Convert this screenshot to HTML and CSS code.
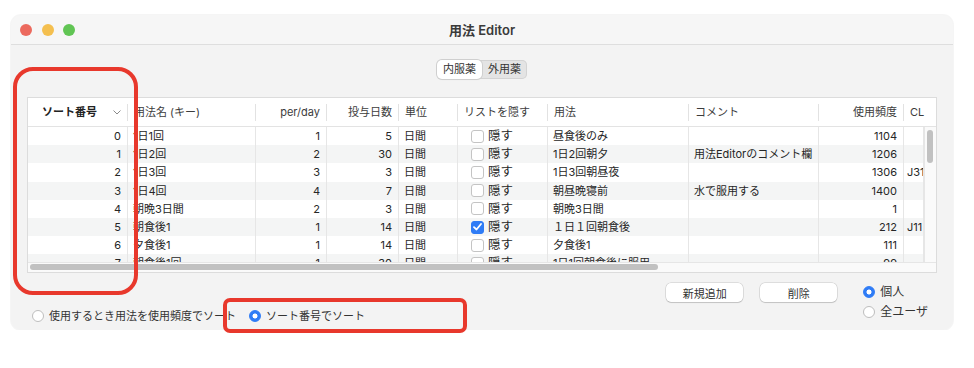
FILE: index.html
```html
<!DOCTYPE html>
<html>

<head>
  <title>用法 Editor</title>
  <link rel="stylesheet" href="styles.css">
</head>

<body>

  <div class="window">
    <div class="titlebar">
      <div class="lights">
        <span class="light red"></span>
        <span class="light yellow"></span>
        <span class="light green"></span>
      </div>
      <div class="title">用法 Editor</div>
      <div></div>
    </div>

    <div class="content">
      <div class="segments">
        <span class="seg active">内服薬</span>
        <span class="seg">外用薬</span>
      </div>

      <div class="table">
        <div class="thead">
          <div class="th sorted"><span>ソート番号</span>
            <svg width="8" height="5" viewBox="0 0 8 5"><polyline points="0.5,0.5 4,4 7.5,0.5" fill="none" stroke="#8a8a8a" stroke-width="1"/></svg>
          </div>
          <div class="th">用法名 (キー)</div>
          <div class="th r">per/day</div>
          <div class="th r">投与日数</div>
          <div class="th">単位</div>
          <div class="th">リストを隠す</div>
          <div class="th">用法</div>
          <div class="th">コメント</div>
          <div class="th r">使用頻度</div>
          <div class="th last">CL</div>
        </div>

        <div class="tbody">
          <div class="rows">
            <div class="row">
              <div class="c r">0</div><div class="c">1日1回</div><div class="c r">1</div><div class="c r">5</div><div class="c">日間</div>
              <div class="c hide"><span class="box"></span>隠す</div>
              <div class="c">昼食後のみ</div><div class="c"></div><div class="c r">1104</div><div class="c"></div>
            </div>
            <div class="row">
              <div class="c r">1</div><div class="c">1日2回</div><div class="c r">2</div><div class="c r">30</div><div class="c">日間</div>
              <div class="c hide"><span class="box"></span>隠す</div>
              <div class="c">1日2回朝夕</div><div class="c">用法Editorのコメント欄</div><div class="c r">1206</div><div class="c"></div>
            </div>
            <div class="row">
              <div class="c r">2</div><div class="c">1日3回</div><div class="c r">3</div><div class="c r">3</div><div class="c">日間</div>
              <div class="c hide"><span class="box"></span>隠す</div>
              <div class="c">1日3回朝昼夜</div><div class="c"></div><div class="c r">1306</div><div class="c cl">J31</div>
            </div>
            <div class="row">
              <div class="c r">3</div><div class="c">1日4回</div><div class="c r">4</div><div class="c r">7</div><div class="c">日間</div>
              <div class="c hide"><span class="box"></span>隠す</div>
              <div class="c">朝昼晩寝前</div><div class="c">水で服用する</div><div class="c r">1400</div><div class="c"></div>
            </div>
            <div class="row">
              <div class="c r">4</div><div class="c">朝晩3日間</div><div class="c r">2</div><div class="c r">3</div><div class="c">日間</div>
              <div class="c hide"><span class="box"></span>隠す</div>
              <div class="c">朝晩3日間</div><div class="c"></div><div class="c r">1</div><div class="c"></div>
            </div>
            <div class="row">
              <div class="c r">5</div><div class="c">朝食後1</div><div class="c r">1</div><div class="c r">14</div><div class="c">日間</div>
              <div class="c hide"><span class="box checked"><svg width="9" height="8" viewBox="0 0 9 8"><polyline points="1,4.2 3.5,6.5 8,1" fill="none" stroke="#fff" stroke-width="1.8" stroke-linecap="round" stroke-linejoin="round"/></svg></span>隠す</div>
              <div class="c">１日１回朝食後</div><div class="c"></div><div class="c r">212</div><div class="c cl">J11</div>
            </div>
            <div class="row">
              <div class="c r">6</div><div class="c">夕食後1</div><div class="c r">1</div><div class="c r">14</div><div class="c">日間</div>
              <div class="c hide"><span class="box"></span>隠す</div>
              <div class="c">夕食後1</div><div class="c"></div><div class="c r">111</div><div class="c"></div>
            </div>
            <div class="row">
              <div class="c r">7</div><div class="c">朝食後1回</div><div class="c r">1</div><div class="c r">30</div><div class="c">日間</div>
              <div class="c hide"><span class="box"></span>隠す</div>
              <div class="c">1日1回朝食後に服用</div><div class="c"></div><div class="c r">99</div><div class="c"></div>
            </div>
          </div>
          <div class="vscroll"><div class="vthumb"></div></div>
        </div>
        <div class="hscroll"><div class="hthumb"></div></div>
      </div>

      <div class="footer">
        <div class="sort-mode">
          <label class="radio"><span class="dot"></span>使用するとき用法を使用頻度でソート</label>
          <label class="radio"><span class="dot on"></span>ソート番号でソート</label>
        </div>
        <div class="actions">
          <button class="btn">新規追加</button>
          <button class="btn">削除</button>
        </div>
        <div class="scope">
          <label class="radio"><span class="dot on"></span>個人</label>
          <label class="radio"><span class="dot"></span>全ユーザ</label>
        </div>
      </div>
    </div>
  </div>

  <!-- annotation marks drawn over the screenshot -->
  <div class="mark mark-col"></div>
  <div class="mark mark-radio"></div>

</body>

</html>
```

FILE: styles.css
```css
body { margin: 0; background: #fff; font-family: Inter, "Noto Sans CJK JP", sans-serif; font-size: 11px; color: #262626; }

.window {
  margin: 15px 0 0 11px;
  width: 942px;
  height: 315px;
  background: #f3f3f3;
  border-radius: 10px;
  overflow: hidden;
  display: flex;
  flex-direction: column;
  box-shadow: 0 0 0 1px rgba(0, 0, 0, 0.04);
}

.titlebar {
  height: 30px;
  box-sizing: border-box;
  background: #f6f6f6;
  border-bottom: 1px solid #dedede;
  display: grid;
  grid-template-columns: 1fr auto 1fr;
  align-items: center;
}
.lights { display: flex; gap: 9.5px; padding-left: 9px; }
.light { width: 12px; height: 12px; border-radius: 50%; }
.light.red { background: #ec6a5e; }
.light.yellow { background: #f4bf4f; }
.light.green { background: #61c554; }
.title { font-size: 13px; font-weight: 600; color: #3a3a3a; }

.content { flex: 1; padding: 15px 16px 0; display: flex; flex-direction: column; }

.segments {
  align-self: center;
  display: flex;
  height: 19px;
  border-radius: 5px;
  background: #e4e4e4;
  box-shadow: inset 0 0 0 1px #d3d3d3;
}
.seg { width: 45px; text-align: center; line-height: 19px; color: #333; }
.seg.active { background: #fff; border-radius: 5px; box-shadow: 0 0 0 1px #cfcfcf, 0 1px 1px rgba(0,0,0,0.08); }

/* table */
.table {
  margin-top: 18px;
  height: 176px;
  box-sizing: border-box;
  background: #fff;
  border: 1px solid #dcdcdc;
  display: flex;
  flex-direction: column;
}
.thead {
  display: grid;
  grid-template-columns: 100px 128px 71px 72px 59px 90px 141px 130px 85px 1fr;
  height: 29px;
  box-sizing: border-box;
  border-bottom: 1px solid #e3e3e3;
  align-items: center;
  color: #3c3c3c;
}
.th {
  height: 17px;
  line-height: 17px;
  padding: 0 6px;
  border-right: 1px solid #e2e2e2;
  white-space: nowrap;
  overflow: hidden;
  box-sizing: border-box;
}
.th.last { border-right: none; }
.th.r { text-align: right; }
.th.sorted { display: flex; align-items: center; font-weight: 700; color: #222; }
.th.sorted span { flex: 1; text-align: center; }
.th.sorted svg { margin-left: 8px; }

.tbody { height: 135px; display: flex; }
.rows { flex: 1; overflow: hidden; }
.row {
  display: grid;
  grid-template-columns: 100px 128px 71px 72px 59px 90px 141px 130px 85px 1fr;
  height: 18.2px;
}
.row:nth-child(even) { background: #f4f5f5; }
.c {
  line-height: 18px;
  padding: 0 6px 0 5px;
  border-right: 1px solid #e6e6e6;
  white-space: nowrap;
  overflow: hidden;
  box-sizing: border-box;
}
.c.r { text-align: right; }
.c.cl { padding-left: 3px; }
.c.hide { display: flex; align-items: center; gap: 4px; padding-left: 13px; font-size: 12.5px; }

.box {
  width: 13px;
  height: 13px;
  box-sizing: border-box;
  border: 1px solid #c4c4c4;
  border-radius: 3px;
  background: #fff;
  display: flex;
  align-items: center;
  justify-content: center;
}
.box.checked { background: #2f7cf6; border-color: #2f7cf6; }

.vscroll { width: 12px; box-sizing: border-box; border-left: 1px solid #e6e6e6; background: #fafafa; }
.vthumb { width: 6px; height: 33px; margin: 3px 0 0 2px; border-radius: 3px; background: #c1c1c1; }

.hscroll { height: 10px; box-sizing: border-box; border-top: 1px solid #e6e6e6; background: #fafafa; }
.hthumb { width: 628px; height: 6px; margin: 1px 0 0 2px; border-radius: 3px; background: #c1c1c1; }

/* bottom controls */
.footer { display: flex; align-items: flex-start; }
.radio { display: flex; align-items: center; gap: 5px; color: #333; white-space: nowrap; }
.dot {
  width: 12px;
  height: 12px;
  box-sizing: border-box;
  border-radius: 50%;
  border: 1px solid #bdbdbd;
  background: #fff;
}
.dot.on { border-color: #2f7cf6; background: radial-gradient(circle, #fff 0 2.2px, #2f7cf6 2.8px); }

.sort-mode { display: flex; gap: 13px; margin: 36px 0 0 5px; line-height: 14px; }
.actions { display: flex; gap: 17px; margin: 10px 0 0 auto; }
.btn {
  width: 77px;
  height: 19px;
  padding: 0;
  border: none;
  border-radius: 5px;
  background: #fff;
  box-shadow: 0 0 0 0.5px rgba(0,0,0,0.18), 0 1px 1px rgba(0,0,0,0.12);
  font-family: inherit;
  font-size: 11px;
  color: #333;
}
.scope { display: flex; flex-direction: column; gap: 4px; margin: 11px 9px 0 26px; font-size: 12px; line-height: 16px; }

/* red annotation marks */
.mark { position: absolute; border: 4px solid #e8382c; box-sizing: border-box; }
.mark-col { left: 13px; top: 67px; width: 125px; height: 228px; border-radius: 20px; }
.mark-radio { left: 223px; top: 298px; width: 244px; height: 35px; border-radius: 7px; }
```
